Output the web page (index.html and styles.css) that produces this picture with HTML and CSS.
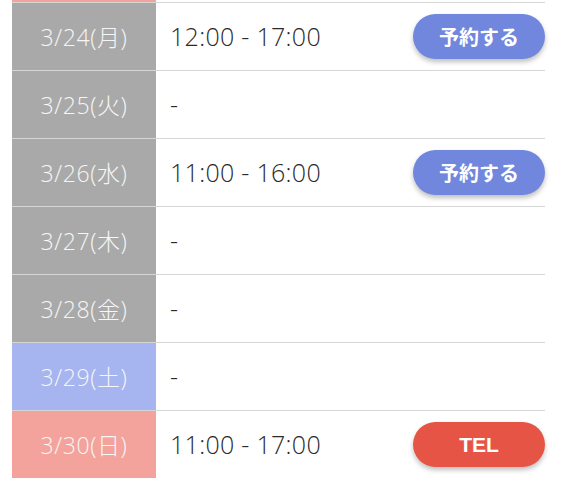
FILE: index.html
```html
<!DOCTYPE html>
<html lang="ja">
<head>
<meta charset="utf-8">
<link rel="stylesheet" href="styles.css">
</head>
<body>
<div class="schedule">
  <div class="row">
    <div class="date sun"></div>
    <div class="time"></div>
  </div>
  <div class="row">
    <div class="date">3/24(月)</div>
    <div class="time"><span class="hours">12:00 - 17:00</span><a class="btn reserve">予約する</a></div>
  </div>
  <div class="row">
    <div class="date">3/25(火)</div>
    <div class="time"><span class="hours">-</span></div>
  </div>
  <div class="row">
    <div class="date">3/26(水)</div>
    <div class="time"><span class="hours">11:00 - 16:00</span><a class="btn reserve">予約する</a></div>
  </div>
  <div class="row">
    <div class="date">3/27(木)</div>
    <div class="time"><span class="hours">-</span></div>
  </div>
  <div class="row">
    <div class="date">3/28(金)</div>
    <div class="time"><span class="hours">-</span></div>
  </div>
  <div class="row">
    <div class="date sat">3/29(土)</div>
    <div class="time"><span class="hours">-</span></div>
  </div>
  <div class="row">
    <div class="date sun">3/30(日)</div>
    <div class="time"><span class="hours">11:00 - 17:00</span><a class="btn tel">TEL</a></div>
  </div>
</div>
</body>
</html>
```

FILE: styles.css
```css
html, body {
  margin: 0;
  padding: 0;
  background: #fff;
}
body {
  font-family: "Open Sans", "Noto Sans CJK JP", sans-serif;
  overflow: hidden;
}
.schedule {
  margin: -65px 0 0 12px;
  width: 533px;
}
.row {
  display: grid;
  grid-template-columns: 144px 1fr;
  height: 68px;
  box-sizing: border-box;
  border-bottom: 1px solid #d6d6d6;
}
.date {
  background: #a9a9a9;
  color: #f6f6f6;
  font-size: 23px;
  font-weight: 300;
  letter-spacing: 0.6px;
  padding-bottom: 2px;
  display: flex;
  align-items: center;
  justify-content: center;
}
.date.sat { background: #a6b4f0; }
.date.sun { background: #f3a39c; }
.time {
  display: flex;
  align-items: center;
  justify-content: space-between;
  padding-left: 14px;
  color: #2a2a2a;
  font-size: 25px;
  font-weight: 300;
}
.hours {
  letter-spacing: 0.3px;
  padding-bottom: 2px;
}
.btn {
  display: flex;
  align-items: center;
  justify-content: center;
  width: 132px;
  height: 45px;
  border-radius: 23px;
  color: #fff;
  font-weight: bold;
  font-size: 20px;
  box-shadow: 0 3px 5px rgba(0,0,0,0.25);
}
.reserve { background: #7087dd; }
.tel {
  background: #e65445;
  font-family: "Liberation Sans", sans-serif;
  font-size: 21px;
}
```
